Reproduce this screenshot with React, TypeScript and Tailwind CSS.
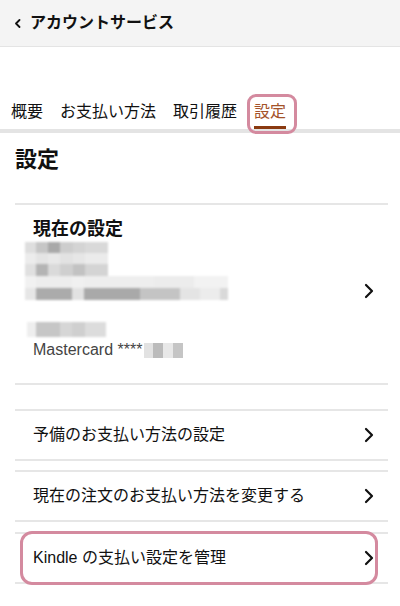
const jp = { fontFamily: '"Liberation Sans", "Noto Sans CJK JP", sans-serif' };

const Chevron = () => (
  <svg width="10" height="16" viewBox="0 0 10 16" fill="none" className="shrink-0">
    <path d="M2 2 L8 8 L2 14" stroke="#111" strokeWidth="2.2" strokeLinecap="round" strokeLinejoin="round" />
  </svg>
);

// pixelated (redacted) rows: [width, colour]
const mosaic: [number, string][][] = [
  [[11, "#dedede"], [12, "#c6c6c6"], [12, "#a9a9a9"], [13, "#cdcdcd"], [12, "#d4d4d4"], [23, "#d9d9d9"]],
  [[11, "#ececec"], [12, "#e4e4e4"], [12, "#e8e8e8"], [13, "#e2e2e2"], [12, "#e6e6e6"], [23, "#ebebeb"]],
  [[11, "#e0e0e0"], [12, "#b4b4b4"], [12, "#dadada"], [13, "#cfcfcf"], [12, "#c2c2c2"], [23, "#d4d4d4"]],
  [[11, "#f1f1f1"], [36, "#ededed"], [12, "#f0f0f0"], [70, "#eeeeee"], [40, "#ececec"], [34, "#f2f2f2"]],
  [[11, "#e6e6e6"], [36, "#ababab"], [12, "#e2e2e2"], [56, "#a9a9a9"], [40, "#c4c4c4"], [20, "#e4e4e4"], [20, "#ececec"], [8, "#d9d9d9"]],
];
const heights = [11, 11, 12, 12, 12];

const Mosaic = ({ cells, h }: { cells: [number, string][]; h: number }) => (
  <div className="flex" style={{ height: h }}>
    {cells.map(([w, c], i) => (
      <div key={i} style={{ width: w, background: c }} />
    ))}
  </div>
);

const Row = ({ label, highlight }: { label: string; highlight?: boolean }) => (
  <div className="relative flex h-[52px] items-center justify-between border-y-2 border-[#e6e6e6] pl-[18px] pr-[14px]">
    <span className="text-[16px] text-[#111]">{label}</span>
    <Chevron />
    {highlight && (
      <div className="absolute -top-[3px] -bottom-[3px] left-[5px] right-[10px] rounded-[12px] border-[3px] border-[#d48a9f]" />
    )}
  </div>
);

const tabs = ["概要", "お支払い方法", "取引履歴", "設定"];

export default function App() {
  return (
    <div className="min-h-[606px] w-[400px] bg-white" style={jp}>
      <div className="flex h-[47px] items-center gap-[9px] border-b border-[#e4e4e4] bg-[#f4f4f4] px-[14px]">
        <svg width="7" height="9" viewBox="0 0 7 9" fill="none">
          <path d="M5.5 1 L2 4.5 L5.5 8" stroke="#111" strokeWidth="1.8" strokeLinecap="round" strokeLinejoin="round" />
        </svg>
        <span className="text-[16px] font-bold text-[#111]">アカウントサービス</span>
      </div>

      <div className="flex h-[86px] items-end gap-[17px] border-b-4 border-[#e4e4e4] px-[11px]">
        {tabs.map((t) => {
          const active = t === "設定";
          return (
            <div
              key={t}
              className={`relative border-b-[3px] pb-[2px] text-[16px] leading-[24px] ${
                active ? "border-[#8a3a10] text-[#a4532a]" : "border-transparent text-[#111]"
              }`}
            >
              {t}
              {active && (
                <div className="absolute -left-[7px] -right-[11px] -top-[6px] -bottom-[8px] rounded-[9px] border-[3px] border-[#d48a9f]" />
              )}
            </div>
          );
        })}
      </div>

      <div className="pl-[15px] pr-[12px]">
        <h1 className="pt-[12px] text-[22px] font-bold leading-[30px] text-[#111]">設定</h1>

        <div className="mt-[28px] flex items-center justify-between border-y-2 border-[#e6e6e6] pl-[18px] pr-[14px]">
          <div className="pt-[11px] pb-[22px]">
            <div className="text-[18px] font-bold leading-[26px] text-[#111]">現在の設定</div>
            <div className="-ml-[8px] blur-[1px]">
              {mosaic.map((cells, i) => (
                <Mosaic key={i} cells={cells} h={heights[i]} />
              ))}
              <div className="ml-[2px] mt-[22px] blur-[0.5px]">
                <Mosaic cells={[[9, "#eeeeee"], [24, "#c6c6c6"], [12, "#d6d6d6"], [13, "#cfcfcf"], [21, "#dcdcdc"]]} h={15} />
              </div>
            </div>
            <div className="mt-[2px] flex items-center text-[16px] leading-[22px] text-[#444]">
              <span>Mastercard ****</span>
              <div className="ml-[2px] blur-[0.5px]">
                <Mosaic cells={[[9, "#e2e2e2"], [10, "#bbbbbb"], [10, "#e8e8e8"], [10, "#c5c5c5"]]} h={15} />
              </div>
            </div>
          </div>
          <div className="-mt-[6px]">
            <Chevron />
          </div>
        </div>

        <div className="mt-[24px]">
          <Row label="予備のお支払い方法の設定" />
        </div>
        <div className="mt-[9px]">
          <Row label="現在の注文のお支払い方法を変更する" />
        </div>
        <div className="mt-[10px]">
          <Row label="Kindle の支払い設定を管理" highlight />
        </div>
      </div>
    </div>
  );
}
